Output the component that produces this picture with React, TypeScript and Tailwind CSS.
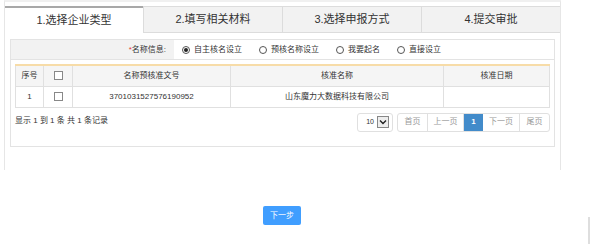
import React from 'react';

const tabs = ['1.选择企业类型', '2.填写相关材料', '3.选择申报方式', '4.提交审批'];
const options = ['自主核名设立', '预核名称设立', '我要起名', '直接设立'];

const Radio: React.FC<{ checked?: boolean; label: string }> = ({ checked, label }) => (
  <label className="flex items-center gap-[4px]">
    <span className="w-[8px] h-[8px] rounded-full border border-[#555] flex items-center justify-center bg-white">
      {checked && <span className="w-[4px] h-[4px] rounded-full bg-[#222]"></span>}
    </span>
    <span>{label}</span>
  </label>
);

const Check: React.FC = () => (
  <span className="inline-block w-[9px] h-[9px] border border-[#888] bg-white align-middle"></span>
);

const App: React.FC = () => {
  return (
    <div
      className="relative w-[590px] h-[244px] bg-white text-[8px] text-[#333]"
      style={{ fontFamily: '"Liberation Sans", "Noto Sans CJK SC", sans-serif' }}
    >
      <div className="ml-[4px] w-[557px] h-[170px] border-l border-r border-[#e6e6e6] border-t-[2px] border-t-[#f0f0f0]">
        {/* tabs */}
        <div className="mt-[4px] flex h-[27px]">
          {tabs.map((t, i) => (
            <div
              key={t}
              className={
                i === 0
                  ? 'flex-1 flex items-center justify-center bg-white border-t-[2px] border-[#a8a8a8] text-[11px] text-[#333]'
                  : 'flex-1 flex items-center justify-center bg-[#f2f2f2] border-t border-l border-b border-[#dcdcdc] text-[11px] text-[#333]'
              }
            >
              {t}
            </div>
          ))}
        </div>

        {/* main panel */}
        <div className="mt-[6px] ml-[5px] w-[545px] h-[108px] border border-[#e3e3e3]">
          <div className="flex h-[20px] border-b border-[#e3e3e3]">
            <div className="w-[163px] bg-[#f2f2f2] flex items-center justify-end pr-[8px]">
              <span className="text-[#e4393c]">*</span>
              <span>名称信息:</span>
            </div>
            <div className="flex items-center gap-[17px] pl-[8px]">
              {options.map((o, i) => (
                <Radio key={o} label={o} checked={i === 0} />
              ))}
            </div>
          </div>

          <div className="px-[4px] pt-[4px]">
            <table className="w-[535px] border-collapse text-center">
              <thead>
                <tr className="h-[21px] bg-[#f5f5f5] border-t-[2px] border-[#f7dca8]">
                  <th className="w-[28px] font-normal border border-t-0 border-[#e0e0e0]">序号</th>
                  <th className="w-[29px] font-normal border border-t-0 border-[#e0e0e0]"><Check /></th>
                  <th className="w-[158px] font-normal border border-t-0 border-[#e0e0e0]">名称预核准文号</th>
                  <th className="w-[213px] font-normal border border-t-0 border-[#e0e0e0]">核准名称</th>
                  <th className="font-normal border border-t-0 border-[#e0e0e0]">核准日期</th>
                </tr>
              </thead>
              <tbody>
                <tr className="h-[21px]">
                  <td className="border border-[#e0e0e0]">1</td>
                  <td className="border border-[#e0e0e0]"><Check /></td>
                  <td className="border border-[#e0e0e0]">3701031527576190952</td>
                  <td className="border border-[#e0e0e0]">山东魔力大数据科技有限公司</td>
                  <td className="border border-[#e0e0e0]"></td>
                </tr>
              </tbody>
            </table>

            <div className="flex justify-between items-start mt-[5px]">
              <div className="pt-[2px]">显示 1 到 1 条 共 1 条记录</div>
              <div className="flex items-center gap-[4px]">
                <div className="w-[36px] h-[19px] border border-[#e0e0e0] rounded-[3px] flex items-center justify-end gap-[3px] pr-[3px]">
                  <span className="text-[7px]">10</span>
                  <span className="w-[12px] h-[12px] border border-[#888] bg-[#eee] flex items-center justify-center">
                    <svg width="8" height="6" viewBox="0 0 8 6">
                      <path d="M1 1.5 L4 4.5 L7 1.5" stroke="#222" strokeWidth="1.4" fill="none" />
                    </svg>
                  </span>
                </div>
                <div className="flex h-[19px] border border-[#e0e0e0] rounded-[3px] overflow-hidden text-[#999]">
                  <span className="w-[30px] flex items-center justify-center border-r border-[#e0e0e0]">首页</span>
                  <span className="w-[36px] flex items-center justify-center border-r border-[#e0e0e0]">上一页</span>
                  <span className="w-[19px] flex items-center justify-center bg-[#428bca] text-white font-bold">1</span>
                  <span className="w-[37px] flex items-center justify-center border-r border-[#e0e0e0]">下一页</span>
                  <span className="w-[29px] flex items-center justify-center">尾页</span>
                </div>
              </div>
            </div>
          </div>
        </div>
      </div>

      <div className="flex mt-[36px] pl-[263px]">
        <button className="w-[38px] h-[19px] bg-[#409eff] text-white text-[8px] rounded-[2px] flex items-center justify-center">
          下一步
        </button>
      </div>

      <div className="absolute right-0 top-[217px] w-[2px] h-[27px] bg-[#dedede]"></div>
    </div>
  );
};

export default App;
